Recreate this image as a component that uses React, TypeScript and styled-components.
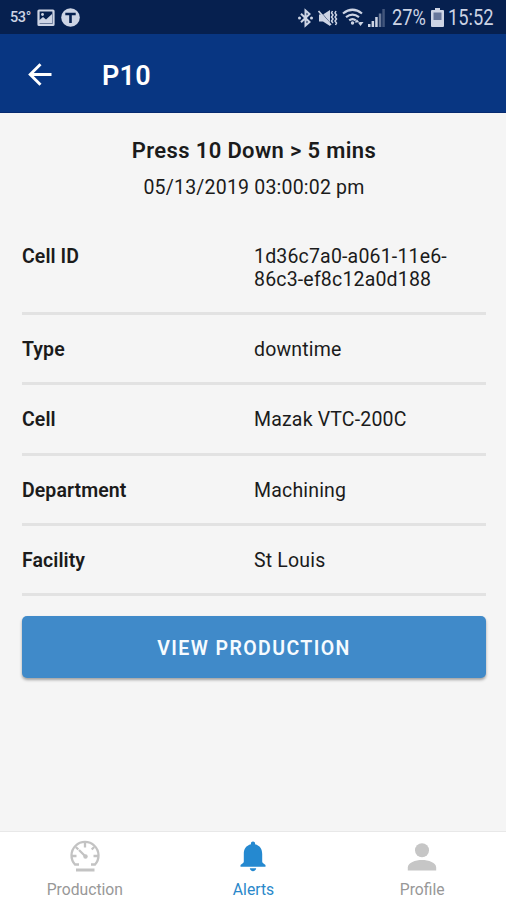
import React from 'react';
import styled, { createGlobalStyle } from 'styled-components';

const GlobalStyle = createGlobalStyle`
  *, *::before, *::after { box-sizing: border-box; }
  body { margin: 0; background: #f5f5f5; }
  svg { display: block; flex: none; }
`;

const Screen = styled.div`
  width: 506px;
  height: 900px;
  display: flex;
  flex-direction: column;
  overflow: hidden;
  background: #f5f5f5;
  color: #1b1b1b;
  font-family: Roboto, sans-serif;
`;

const StatusBar = styled.div`
  height: 34px;
  flex: none;
  display: flex;
  align-items: center;
  justify-content: space-between;
  padding: 1px 11px 0 10px;
  background: #06204f;
  color: #cdd4e4;
`;

const StatusGroup = styled.div<{ $gap: number }>`
  display: flex;
  align-items: center;
  gap: ${(p) => p.$gap}px;
`;

const Temperature = styled.span`
  width: 21px;
  font-size: 14.5px;
  font-weight: 500;
  letter-spacing: -0.4px;
  white-space: nowrap;
`;

const StatusText = styled.span<{ $width: number }>`
  width: ${(p) => p.$width}px;
  padding-top: 1px;
  font-size: 22px;
  line-height: 24px;
  white-space: nowrap;
  transform: scaleX(0.83);
  transform-origin: left center;
`;

const AppBar = styled.header`
  height: 79px;
  flex: none;
  display: flex;
  align-items: center;
  padding: 3px 24px 0;
  gap: 46px;
  background: #083682;
  border-bottom: 1px solid #062a70;
  color: #fff;
`;

const BackButton = styled.button`
  padding: 0;
  border: 0;
  background: none;
  color: inherit;
`;

const BarTitle = styled.h1`
  margin: 0;
  padding-top: 2px;
  font-size: 27px;
  font-weight: 600;
  line-height: 32px;
  letter-spacing: 0.3px;
`;

const Content = styled.main`
  flex: 1;
  padding: 24px 20px 0 22px;
`;

const AlertTitle = styled.h2`
  margin: 0;
  text-align: center;
  font-size: 22px;
  font-weight: 600;
  line-height: 27px;
  letter-spacing: 0.36px;
`;

const AlertTime = styled.p`
  margin: 11px 0 0;
  text-align: center;
  font-size: 19.5px;
  line-height: 26px;
  letter-spacing: 0.2px;
`;

const Details = styled.dl`
  margin: 20px 0 0;
`;

const Row = styled.div`
  display: grid;
  grid-template-columns: 1fr 1fr;
  padding: 24px 0 22.3px;
  border-bottom: 3px solid #e2e2e2;
  line-height: 21px;
  font-size: 19.5px;

  &:first-child {
    padding: 24px 0 21px;
    line-height: 23px;
  }
`;

const Label = styled.dt`
  font-weight: 600;
  letter-spacing: 0.08px;
`;

const Value = styled.dd`
  margin: 0;
  letter-spacing: 0.18px;
`;

const PrimaryButton = styled.button`
  display: block;
  width: 100%;
  height: 62px;
  margin-top: 20px;
  padding: 4px 0 0;
  border: 0;
  border-radius: 5px;
  background: #408ac9;
  box-shadow: 0 2px 3px rgba(0, 0, 0, 0.35);
  color: #f6fbff;
  font: 600 19.5px/24px Roboto, sans-serif;
  letter-spacing: 1.4px;
`;

const TabBar = styled.nav`
  height: 69px;
  flex: none;
  display: grid;
  grid-template-columns: repeat(3, 1fr);
  border-top: 1px solid #e8e8e8;
  background: #fff;
`;

const Tab = styled.a<{ $active?: boolean }>`
  display: flex;
  flex-direction: column;
  align-items: center;
  padding-top: 8px;
  padding-left: 1px;
  gap: 6px;
  color: ${(p) => (p.$active ? '#2a88ca' : '#989898')};
  font-size: 15.7px;
  line-height: 20px;
`;

const details = [
  { label: 'Cell ID', value: '1d36c7a0-a061-11e6-86c3-ef8c12a0d188' },
  { label: 'Type', value: 'downtime' },
  { label: 'Cell', value: 'Mazak VTC-200C' },
  { label: 'Department', value: 'Machining' },
  { label: 'Facility', value: 'St Louis' },
];

const PictureIcon = () => (
  <svg width="18" height="18" viewBox="0 0 18 18" fill="none" stroke="currentColor" strokeWidth="2.2">
    <rect x="1.5" y="1.5" width="15" height="14.5" rx="0.5" />
    <path d="M2 11.5l4-3.5 3 2.5 6-5.5v9.500H2z" fill="currentColor" stroke="none" />
    <circle cx="5.5" cy="5.5" r="1.4" fill="currentColor" stroke="none" />
  </svg>
);

const BadgeIcon = () => (
  <svg width="19" height="19" viewBox="0 0 19 19">
    <circle cx="9.5" cy="9.5" r="9.3" fill="currentColor" />
    <path d="M4.3 6h10.4M9.5 6v9" stroke="#06204f" strokeWidth="2.6" />
  </svg>
);

const BluetoothIcon = () => (
  <svg width="17" height="20" viewBox="0 0 17 20" fill="none" stroke="currentColor" strokeWidth="2">
    <path d="M4 5.800l8.500 8.200-4 3.500v-15l4 3.500L4 14.200" />
    <circle cx="2.5" cy="10" r="1.5" fill="currentColor" stroke="none" />
    <circle cx="14.5" cy="10" r="1.5" fill="currentColor" stroke="none" />
  </svg>
);

const VibrateIcon = () => (
  <svg width="20" height="20" viewBox="0 0 20 20" fill="none" stroke="currentColor">
    <path d="M1 6.5h4l7-4.500v16l-7-4.500H1z" fill="currentColor" stroke="none" />
    <path d="M1.5 2.500l12 14" stroke="#06204f" strokeWidth="0.8" />
    <path d="M0.5 3l12.500 14" strokeWidth="1.6" />
    <path d="M14.5 3l-1 2 1.500 2-1.500 2 1.500 2-1.500 2 1.500 2M18 3l-1 2 1.500 2-1.500 2 1.500 2-1.500 2 1.500 2-1 2" strokeWidth="1.5" />
  </svg>
);

const WifiIcon = () => (
  <svg width="22" height="19" viewBox="0 0 22 19" fill="none" stroke="currentColor" strokeWidth="2.2">
    <path d="M1 5.500Q10.500-2 20 5.500M4 9.200q6.500-5 13 0M7.200 12.400q3.300-2.600 6.600 0" />
    <circle cx="10.500" cy="15" r="1.700" fill="currentColor" stroke="none" />
    <path d="M12.500 14.500h5L15 11.500zM15.500 14h6L18.500 18z" fill="currentColor" stroke="none" />
  </svg>
);

const SignalIcon = () => (
  <svg width="20" height="18" viewBox="0 0 20 18" fill="currentColor">
    <path d="M0 15h2.500v3H0zM3.600 12h2.500v6H3.600zM7.200 8h2.500v10H7.200z" />
    <path d="M10.800 4.500h2.500V18h-2.500z" opacity=".5" />
    <path d="M14.300 0h2.500v18h-2.500z" opacity=".3" />
  </svg>
);

const BatteryIcon = () => (
  <svg width="13" height="19" viewBox="0 0 13 19">
    <path d="M4 0h5v2h3a1 1 0 0 1 1 1v15a1 1 0 0 1-1 1H1a1 1 0 0 1-1-1V3a1 1 0 0 1 1-1h3z" fill="currentColor" />
    <path d="M2.500 4.500h8V12h-8z" fill="#67779b" />
  </svg>
);

const BackIcon = () => (
  <svg width="32" height="32" viewBox="0 0 32 32" fill="none" stroke="currentColor" strokeWidth="2.9">
    <path d="M27.500 15.500H6.500M16.500 5.200L6.200 15.500l10.300 10.300" />
  </svg>
);

const GaugeIcon = () => (
  <svg width="32" height="34" viewBox="0 0 32 34" fill="none" stroke="#c3c3c3" strokeWidth="2.3">
    <path d="M10 24.500H6a13.500 13.500 0 1 1 20 0h-4" />
    <path d="M16 3v4.500M6.800 7l2.500 2.500M25.200 7l-2.500 2.500M3 16h4.500M29 16h-4.500" />
    <path d="M10 10l6.500 6.500" />
    <circle cx="16.500" cy="16.500" r="2.200" fill="#c3c3c3" stroke="none" />
    <path d="M7 30h18.500" strokeWidth="3" />
  </svg>
);

const BellIcon = () => (
  <svg width="32" height="34" viewBox="0 0 32 34" fill="#2589d0">
    <path d="M16 1.500a2.100 2.100 0 0 0-2 2.700C9 5.500 6.800 9 6.800 14v7.500c0 1-.7 1.700-3.300 3.500v1.800h25V25c-2.600-1.800-3.300-2.500-3.300-3.500V14c0-5-2.200-8.500-7.200-9.800a2.100 2.100 0 0 0-2-2.700z" />
    <path d="M12.800 28.300h6.400c-.3 1.700-1.500 2.900-3.200 2.900s-2.900-1.200-3.200-2.900z" />
  </svg>
);

const PersonIcon = () => (
  <svg width="32" height="34" viewBox="0 0 32 34" fill="#c6c6c6">
    <circle cx="16" cy="10.200" r="7" />
    <path d="M1.800 30.500v-3c0-5 7.700-7.500 14.200-7.500s14.200 2.500 14.200 7.500v3z" />
  </svg>
);

export default function App() {
  return (
    <Screen>
      <GlobalStyle />
      <StatusBar>
        <StatusGroup $gap={6}>
          <Temperature>53°</Temperature>
          <PictureIcon />
          <BadgeIcon />
        </StatusGroup>
        <StatusGroup $gap={4}>
          <BluetoothIcon />
          <VibrateIcon />
          <WifiIcon />
          <SignalIcon />
          <StatusText $width={35}>27%</StatusText>
          <BatteryIcon />
          <StatusText $width={47}>15:52</StatusText>
        </StatusGroup>
      </StatusBar>
      <AppBar>
        <BackButton aria-label="Back">
          <BackIcon />
        </BackButton>
        <BarTitle>P10</BarTitle>
      </AppBar>
      <Content>
        <AlertTitle>Press 10 Down &gt; 5 mins</AlertTitle>
        <AlertTime>05/13/2019 03:00:02 pm</AlertTime>
        <Details>
          {details.map(({ label, value }) => (
            <Row key={label}>
              <Label>{label}</Label>
              <Value>{value}</Value>
            </Row>
          ))}
        </Details>
        <PrimaryButton>VIEW PRODUCTION</PrimaryButton>
      </Content>
      <TabBar>
        <Tab>
          <GaugeIcon />
          Production
        </Tab>
        <Tab $active>
          <BellIcon />
          Alerts
        </Tab>
        <Tab>
          <PersonIcon />
          Profile
        </Tab>
      </TabBar>
    </Screen>
  );
}
